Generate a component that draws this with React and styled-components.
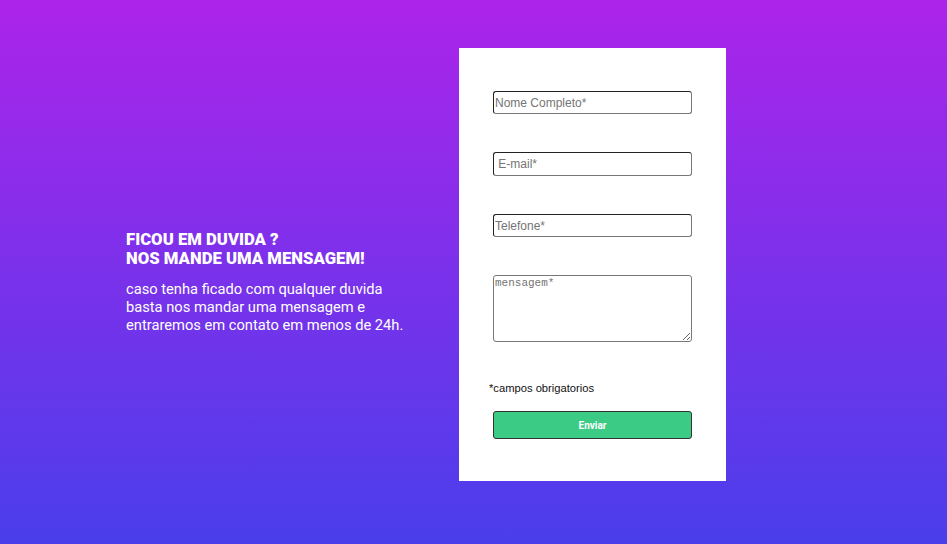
import React from "react";
import styled, { createGlobalStyle } from "styled-components";

const GlobalStyle = createGlobalStyle`
  html, body {
    margin: 0;
    padding: 0;
  }
  body {
    font-family: Roboto, "Liberation Sans", sans-serif;
  }
`;

export default function App() {
  return (
    <>
      <GlobalStyle />
      <Page>
        <Info>
          <h2>
            Ficou em duvida ?<br />
            Nos mande uma mensagem!
          </h2>
          <p>
            caso tenha ficado com qualquer duvida basta nos mandar uma mensagem
            e entraremos em contato em menos de 24h.
          </p>
        </Info>
        <Card>
          <Field type="text" placeholder="Nome Completo*" />
          <Field type="email" placeholder=" E-mail*" tall />
          <Field type="tel" placeholder="Telefone*" />
          <Message placeholder="mensagem*" />
          <Required>*campos obrigatorios</Required>
          <SendButton>Enviar</SendButton>
        </Card>
      </Page>
    </>
  );
}

const Page = styled.div`
  width: 947px;
  height: 544px;
  box-sizing: border-box;
  background: linear-gradient(180deg, #ac24ea 0%, #4a3eeb 100%);
  display: flex;
  align-items: flex-start;
  padding: 48px 0 0 126px;
  gap: 43px;
`;

const Info = styled.div`
  width: 290px;
  margin-top: 182px;
  color: white;
  h2 {
    margin: 0;
    font-size: 16.7px;
    font-weight: 900;
    line-height: 19px;
    text-transform: uppercase;
  }
  p {
    margin: 12px 0 0;
    font-size: 14.7px;
    line-height: 18px;
  }
`;

const Card = styled.form`
  width: 267px;
  height: 433px;
  box-sizing: border-box;
  background: white;
  display: flex;
  flex-direction: column;
  padding: 43px 34px 0;
`;

const Field = styled.input`
  width: 199px;
  height: ${(props) => (props.tall ? "24px" : "23px")};
  box-sizing: border-box;
  margin: 0 0 38px;
  padding: 0 1px;
  border: 1px solid #222;
  border-bottom-color: #777;
  border-right-color: #777;
  border-radius: 3px;
  font-family: "Liberation Sans", Arial, sans-serif;
  font-size: 12px;
  &::placeholder {
    color: #757575;
  }
`;

const Message = styled.textarea`
  width: 199px;
  height: 67px;
  box-sizing: border-box;
  margin: 0;
  padding: 1px;
  border: 1px solid #777;
  border-radius: 3px;
  font-family: "Liberation Mono", monospace;
  font-size: 11px;
  &::placeholder {
    color: #757575;
  }
`;

const Required = styled.span`
  margin: 39px 0 0 -4px;
  font-family: "Liberation Sans", Arial, sans-serif;
  font-size: 11.2px;
  line-height: 14px;
  color: #111;
`;

const SendButton = styled.button`
  margin-top: 16px;
  width: 199px;
  height: 28px;
  background: #3ccb85;
  border: 1px solid #333;
  border-radius: 3px;
  color: white;
  font-family: Roboto, sans-serif;
  font-weight: 700;
  font-size: 10px;
`;
